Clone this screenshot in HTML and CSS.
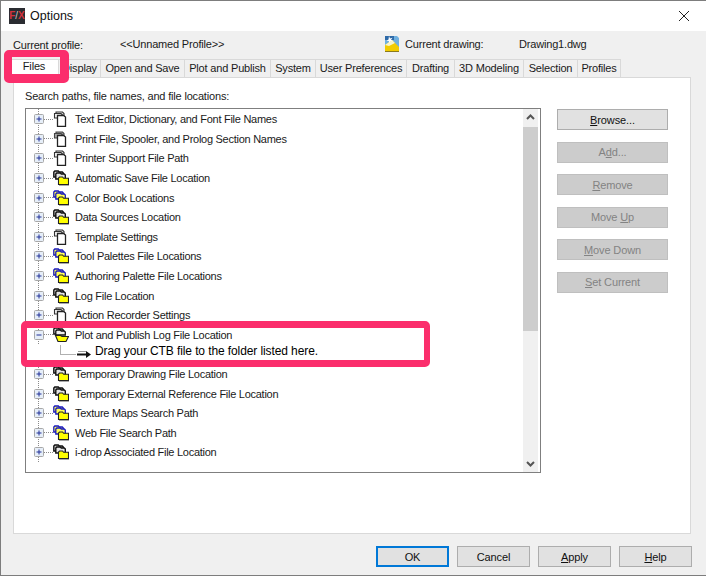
FILE: index.html
```html
<!DOCTYPE html>
<html lang="en">
<head>
<meta charset="utf-8">
<title>Options</title>
<link rel="stylesheet" href="styles.css">
</head>
<body>
<svg class="defs" width="0" height="0" aria-hidden="true">
  <symbol id="docs" viewBox="0 0 16 16">
    <path d="M3 1h6.500l1.500 1.500V5H3z" fill="#e4e4e4" stroke="#333" stroke-width="1.100"/>
    <path d="M1.500 2.500h6.500l1.500 1.500v3h-8z" fill="#f2f2f2" stroke="#333" stroke-width="1.100"/>
    <path d="M4.500 4.500h6l2 1.500v9.500h-8z" fill="#fff" stroke="#222" stroke-width="1.300"/>
  </symbol>
  <symbol id="docsgrey" viewBox="0 0 16 16">
    <path d="M3 1h6.500l1.500 1.500V5H3z" fill="#999" stroke="#444" stroke-width="1.100"/>
    <path d="M1.500 2.500h6.500l1.500 1.500v3h-8z" fill="#aaa" stroke="#444" stroke-width="1.100"/>
    <path d="M4.500 4.500h6l2 1.500v9.500h-8z" fill="#fff" stroke="#222" stroke-width="1.300"/>
  </symbol>
  <symbol id="folders" viewBox="0 0 16 16">
    <path d="M.8 7V2l1-1h3.500l1 1h3l1 1v4z" fill="#c8c8c8" stroke="#111" stroke-width="1.400"/>
    <path d="M2.800 9V4l1-1h3.500l1 1h3l1 1v4z" fill="#e4e4e4" stroke="#111" stroke-width="1.400"/>
    <path d="M5.500 14.500V8l1-1h3l1.200 1.300h4.800v6.200z" fill="#ffff00" stroke="#222" stroke-width="1.100"/>
    <path d="M6 15.500h10" stroke="#aaa"/>
  </symbol>
  <symbol id="foldersblue" viewBox="0 0 16 16">
    <path d="M.8 7V2l1-1h3.500l1 1h3l1 1v4z" fill="#ffff55" stroke="#1818c0" stroke-width="1.300"/>
    <path d="M2.800 9V4l1-1h3.500l1 1h3l1 1v4z" fill="#ffff55" stroke="#1818c0" stroke-width="1.300"/>
    <path d="M5.500 14.500V8l1-1h3l1.200 1.300h4.800v6.200z" fill="#ffff00" stroke="#222" stroke-width="1.100"/>
    <path d="M6 15.500h10" stroke="#aaa"/>
  </symbol>
  <symbol id="open" viewBox="0 0 16 16">
    <path d="M.8 7V2l1-1h3.500l1 1h3l1 1v4z" fill="#d8d8d8" stroke="#111" stroke-width="1.300"/>
    <path d="M2.800 9V4l1-1h3.500l1 1h3l1 1v3h-9z" fill="#eee" stroke="#111" stroke-width="1.300"/>
    <path d="M2.500 8.500h5l1.500 1h6.500l-2.500 5h-8z" fill="#ffff00" stroke="#222" stroke-width="1.100"/>
  </symbol>
  <symbol id="plus" viewBox="0 0 10 10">
    <rect x=".5" y=".5" width="9" height="9" rx="1" fill="#e6eef8" stroke="#a8a8a8"/>
    <path d="M2.500 5h5M5 2.500v5" stroke="#1f2f96"/>
  </symbol>
  <symbol id="minus" viewBox="0 0 10 10">
    <rect x=".5" y=".5" width="9" height="9" rx="1" fill="#e6eef8" stroke="#a8a8a8"/>
    <path d="M2.500 5h5" stroke="#1f2f96"/>
  </symbol>
</svg>

<div class="window">
  <header class="titlebar">
    <div class="logo"><span class="logo-f">F</span><span class="logo-s">/</span><span class="logo-f">X</span></div>
    <span class="title">Options</span>
    <svg class="close" width="12" height="12" viewBox="0 0 12 12"><path d="M1 1l10 10M11 1L1 11" stroke="#222" fill="none"/></svg>
  </header>

  <main class="content">
    <div class="profile">
      <span class="profile-label">Current profile:</span>
      <span class="profile-value">&lt;&lt;Unnamed Profile&gt;&gt;</span>
      <svg class="drawing-icon" width="16" height="17" viewBox="0 0 16 17">
        <path d="M1 1h12l2 2v13H1z" fill="#6fb0e0"/>
        <path d="M1 1h9v4H1z" fill="#2e6aa8"/>
        <path d="M1 10l7-5 7 7v4H1z" fill="#f2cc00"/>
        <path d="M1 10l7-5 3 3-6 3z" fill="#f8f4cc"/>
        <path d="M5 1l1 2.500 2.500-.8-1.500 2 2 1.500-2.500-.2L5.500 8 4.800 6 2.500 6l2-1.500z" fill="#fff"/>
        <path d="M1 16.500h14" stroke="#8a7a20"/>
      </svg>
      <span class="drawing-label">Current drawing:</span>
      <span class="drawing-value">Drawing1.dwg</span>
    </div>

    <nav class="tabs">
      <span class="tab tab-files is-active">Files</span>
      <span class="tab tab-display">Display</span>
      <span class="tab tab-open">Open and Save</span>
      <span class="tab tab-plot">Plot and Publish</span>
      <span class="tab tab-system">System</span>
      <span class="tab tab-user">User Preferences</span>
      <span class="tab tab-drafting">Drafting</span>
      <span class="tab tab-model">3D Modeling</span>
      <span class="tab tab-selection">Selection</span>
      <span class="tab tab-profiles">Profiles</span>
    </nav>

    <section class="panel">
      <div class="panel-label">Search paths, file names, and file locations:</div>
      <div class="panel-row">
        <div class="listbox">
          <ul class="tree">
            <li class="row"><svg class="exp"><use href="#plus"/></svg><i class="dots"></i><svg class="ico"><use href="#docs"/></svg><span class="txt">Text Editor, Dictionary, and Font File Names</span></li>
            <li class="row"><svg class="exp"><use href="#plus"/></svg><i class="dots"></i><svg class="ico"><use href="#docsgrey"/></svg><span class="txt">Print File, Spooler, and Prolog Section Names</span></li>
            <li class="row"><svg class="exp"><use href="#plus"/></svg><i class="dots"></i><svg class="ico"><use href="#docs"/></svg><span class="txt">Printer Support File Path</span></li>
            <li class="row"><svg class="exp"><use href="#plus"/></svg><i class="dots"></i><svg class="ico"><use href="#folders"/></svg><span class="txt">Automatic Save File Location</span></li>
            <li class="row"><svg class="exp"><use href="#plus"/></svg><i class="dots"></i><svg class="ico"><use href="#foldersblue"/></svg><span class="txt">Color Book Locations</span></li>
            <li class="row"><svg class="exp"><use href="#plus"/></svg><i class="dots"></i><svg class="ico"><use href="#folders"/></svg><span class="txt">Data Sources Location</span></li>
            <li class="row"><svg class="exp"><use href="#plus"/></svg><i class="dots"></i><svg class="ico"><use href="#docs"/></svg><span class="txt">Template Settings</span></li>
            <li class="row"><svg class="exp"><use href="#plus"/></svg><i class="dots"></i><svg class="ico"><use href="#foldersblue"/></svg><span class="txt">Tool Palettes File Locations</span></li>
            <li class="row"><svg class="exp"><use href="#plus"/></svg><i class="dots"></i><svg class="ico"><use href="#foldersblue"/></svg><span class="txt">Authoring Palette File Locations</span></li>
            <li class="row"><svg class="exp"><use href="#plus"/></svg><i class="dots"></i><svg class="ico"><use href="#folders"/></svg><span class="txt">Log File Location</span></li>
            <li class="row"><svg class="exp"><use href="#plus"/></svg><i class="dots"></i><svg class="ico"><use href="#docs"/></svg><span class="txt">Action Recorder Settings</span></li>
            <li class="row"><svg class="exp"><use href="#minus"/></svg><i class="dots"></i><svg class="ico"><use href="#open"/></svg><span class="txt">Plot and Publish Log File Location</span></li>
            <li class="row row-child">
              <i class="elbow"></i>
              <svg class="arrow" width="14" height="10" viewBox="0 0 14 10"><path d="M0 4.500h9V2l5 3.500L9 9V6.500H0z" fill="#111"/><path d="M1 2.500h8" stroke="#999"/></svg>
              <span class="txt-child">Drag your CTB file to the folder listed here.</span>
            </li>
            <li class="row"><svg class="exp"><use href="#plus"/></svg><i class="dots"></i><svg class="ico"><use href="#folders"/></svg><span class="txt">Temporary Drawing File Location</span></li>
            <li class="row"><svg class="exp"><use href="#plus"/></svg><i class="dots"></i><svg class="ico"><use href="#folders"/></svg><span class="txt">Temporary External Reference File Location</span></li>
            <li class="row"><svg class="exp"><use href="#plus"/></svg><i class="dots"></i><svg class="ico"><use href="#foldersblue"/></svg><span class="txt">Texture Maps Search Path</span></li>
            <li class="row"><svg class="exp"><use href="#plus"/></svg><i class="dots"></i><svg class="ico"><use href="#foldersblue"/></svg><span class="txt">Web File Search Path</span></li>
            <li class="row"><svg class="exp"><use href="#plus"/></svg><i class="dots"></i><svg class="ico"><use href="#folders"/></svg><span class="txt">i-drop Associated File Location</span></li>
          </ul>
          <div class="scrollbar">
            <svg class="sb-arrow" width="15" height="18" viewBox="0 0 15 18"><path d="M4 10l3.500-3.500L11 10" fill="none" stroke="#555" stroke-width="2"/></svg>
            <div class="sb-thumb"></div>
            <svg class="sb-arrow sb-down" width="15" height="18" viewBox="0 0 15 18"><path d="M4 8l3.500 3.500L11 8" fill="none" stroke="#555" stroke-width="2"/></svg>
          </div>
        </div>
        <div class="actions">
          <button class="btn btn-side"><u>B</u>rowse...</button>
          <button class="btn btn-side is-off">A<u>d</u>d...</button>
          <button class="btn btn-side is-off"><u>R</u>emove</button>
          <button class="btn btn-side is-off">Move <u>U</u>p</button>
          <button class="btn btn-side is-off"><u>M</u>ove Down</button>
          <button class="btn btn-side is-off"><u>S</u>et Current</button>
        </div>
      </div>
    </section>

    <footer class="footer">
      <button class="btn btn-foot is-default">OK</button>
      <button class="btn btn-foot">Cancel</button>
      <button class="btn btn-foot"><u>A</u>pply</button>
      <button class="btn btn-foot"><u>H</u>elp</button>
    </footer>
  </main>

  <div class="mark mark-tab"></div>
  <div class="mark mark-row"></div>
</div>
</body>
</html>
```
FILE: styles.css
```css
* { box-sizing: border-box; }
html, body { margin: 0; padding: 0; }
body { font: 11px/14px "Liberation Sans", Arial, sans-serif; letter-spacing: -.18px; color: #1a1a1a; background: #f0f0f0; }
.defs { position: absolute; }
.window {
  position: relative;
  width: 706px; height: 576px;
  display: flex; flex-direction: column;
  border: 1px solid #7d7d7d; border-right: 0;
  background: #f0f0f0;
  overflow: hidden;
}
.titlebar { height: 30px; flex: none; background: #fff; display: flex; align-items: center; padding: 0 16px 0 8px; }
.logo { width: 16px; height: 16px; background: #2a2c31; display: flex; align-items: center; justify-content: center; margin-right: 5px; letter-spacing: 0; font: bold 10px/1 "Liberation Sans", sans-serif; }
.logo-f { color: #d4323c; }
.logo-s { color: #c8c8c8; font-weight: normal; }
.title { font-size: 12.5px; letter-spacing: 0; color: #111; flex: 1; }
.close { flex: none; }
.content { flex: 1; display: flex; flex-direction: column; padding-left: 11px; }
.profile { height: 28px; flex: none; display: flex; align-items: center; padding-bottom: 3px; }
.profile-label { width: 108px; padding: 3px 0 0 1px; }
.profile-value { width: 264px; }
.drawing-icon { flex: none; margin-right: 5px; }
.drawing-label { width: 114px; }
.tabs { display: flex; height: 18px; flex: none; }
.tab { height: 19px; background: #f0f0f0; border: 1px solid #d9d9d9; border-left: 0; text-align: center; line-height: 17px; flex: none; }
.tab-files { width: 47px; background: #fff; border-bottom-color: #fff; line-height: 13px; padding-right: 2px; }
.tab-display { width: 42px; }
.tab-open { width: 84px; }
.tab-plot { width: 86px; }
.tab-system { width: 45px; }
.tab-user { width: 91px; }
.tab-drafting { width: 48px; }
.tab-model { width: 69px; }
.tab-selection { width: 54px; }
.tab-profiles { width: 43px; }
.panel { width: 678px; margin-left: 1px; height: 457px; flex: none; background: #fff; border: 1px solid #d9d9d9; padding: 11px 0 0 11px; }
.panel-label { height: 19px; }
.panel-row { display: flex; align-items: flex-start; }
.listbox { width: 516px; height: 365px; flex: none; border: 1px solid #7f7f7f; background: #fff; display: flex; overflow: hidden; }
.tree {
  list-style: none; margin: 0; padding: .5px 0 0; flex: 1; min-width: 0; letter-spacing: -.27px;
  background: repeating-linear-gradient(to bottom, #8a8a8a 0 1px, transparent 1px 2px) 12px 0 / 1px 354px no-repeat;
}
.row { height: 19.6px; display: flex; align-items: center; padding-left: 8px; white-space: nowrap; }
.exp { width: 10px; height: 10px; flex: none; }
.dots { width: 9px; height: 1px; flex: none; background: repeating-linear-gradient(to right, #8a8a8a 0 1px, transparent 1px 2px); }
.ico { width: 16px; height: 16px; flex: none; margin-right: 6px; }
.row-child { background: #fff; padding-left: 34px; color: #000; }
.elbow { width: 16px; height: 10px; align-self: flex-start; border-left: 1px solid #b0b0b0; border-bottom: 1px solid #b0b0b0; flex: none; }
.arrow { flex: none; margin: 0 4px 0 1px; }
.txt-child { font-size: 12px; letter-spacing: -.1px; transform: translateY(-3px); }
.scrollbar { width: 15px; flex: none; margin-right: 2px; background: #f0f0f0; display: flex; flex-direction: column; }
.sb-arrow { flex: none; display: block; }
.sb-thumb { height: 204px; background: #cdcdcd; flex: none; }
.sb-down { margin-top: auto; }
.actions { width: 111px; flex: none; margin-left: 16px; margin-top: 1px; display: flex; flex-direction: column; gap: 11.6px; }
.btn { font: inherit; letter-spacing: -.12px; color: #111; padding: 0; background: #e1e1e1; border: 1px solid #adadad; height: 21px; }
.btn-side { width: 111px; }
.is-off { background: #ccc; border-color: #bfbfbf; color: #838383; }
.footer { flex: 1; display: flex; gap: 8px; padding: 12px 0 0 364px; }
.btn-foot { width: 73px; }
.is-default { border: 2px solid #0078d7; }
.mark { position: absolute; background: transparent; border-style: solid; border-color: #fb2e6c; border-radius: 5px; pointer-events: none; }
.mark-tab { left: 3px; top: 49px; width: 65px; height: 33px; border-width: 7px 9px 9px 8px; }
.mark-row { left: 20px; top: 320px; width: 409px; height: 46px; border-width: 7px 6px; }
```
